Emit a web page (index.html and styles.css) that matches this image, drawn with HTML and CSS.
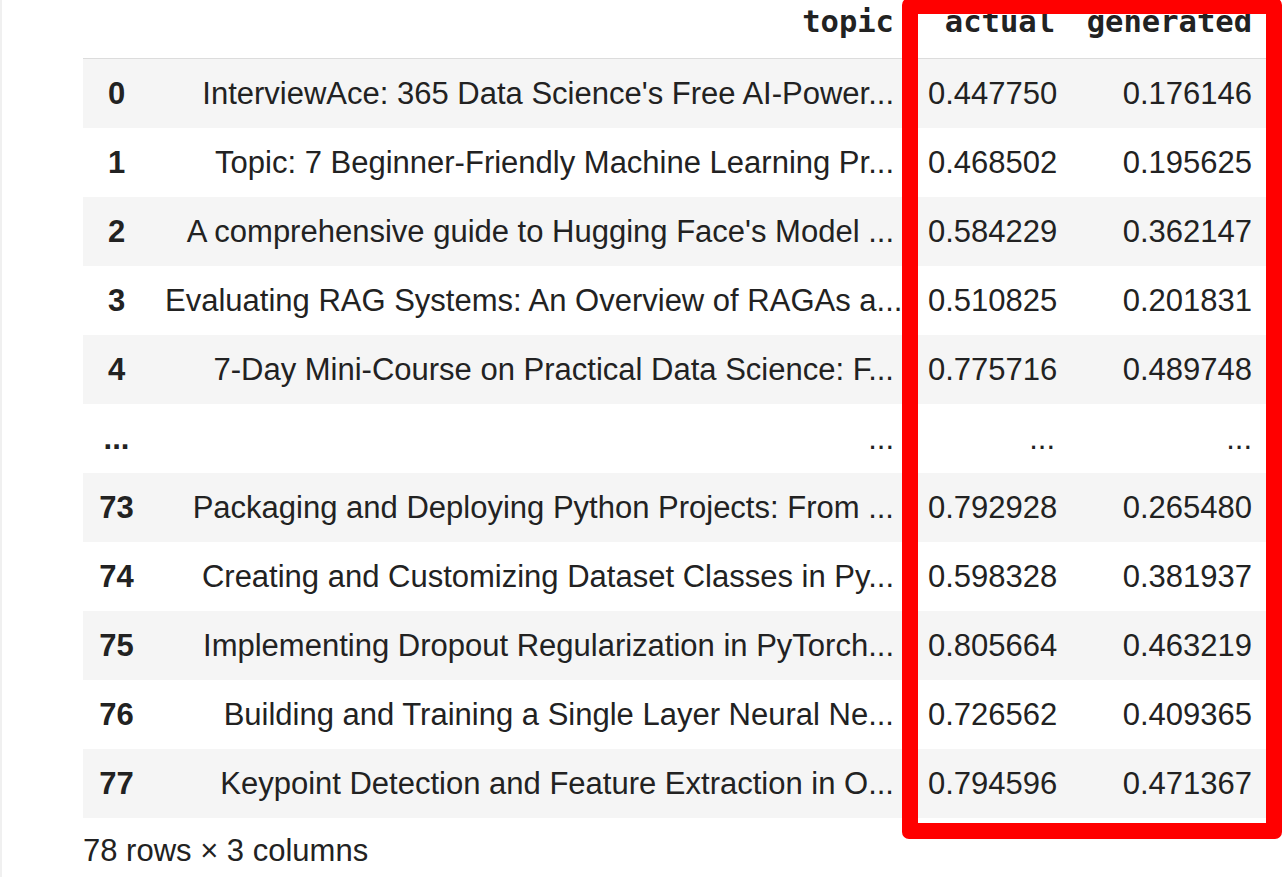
FILE: index.html
```html
<!DOCTYPE html>
<html lang="en">
<head>
<meta charset="utf-8">
<title>DataFrame output</title>
<link rel="stylesheet" href="styles.css">
</head>
<body>
<div class="output">
  <table class="dataframe">
    <colgroup>
      <col class="c-index">
      <col class="c-topic">
      <col class="c-actual">
      <col class="c-generated">
    </colgroup>
    <thead>
      <tr><th></th><th class="topic">topic</th><th class="actual">actual</th><th class="generated">generated</th></tr>
    </thead>
    <tbody>
      <tr><th>0</th><td class="topic">InterviewAce: 365 Data Science's Free AI-Power...</td><td class="actual">0.447750</td><td class="generated">0.176146</td></tr>
      <tr><th>1</th><td class="topic">Topic: 7 Beginner-Friendly Machine Learning Pr...</td><td class="actual">0.468502</td><td class="generated">0.195625</td></tr>
      <tr><th>2</th><td class="topic">A comprehensive guide to Hugging Face's Model ...</td><td class="actual">0.584229</td><td class="generated">0.362147</td></tr>
      <tr><th>3</th><td class="topic">Evaluating RAG Systems: An Overview of RAGAs a...</td><td class="actual">0.510825</td><td class="generated">0.201831</td></tr>
      <tr><th>4</th><td class="topic">7-Day Mini-Course on Practical Data Science: F...</td><td class="actual">0.775716</td><td class="generated">0.489748</td></tr>
      <tr><th>...</th><td class="topic">...</td><td class="actual">...</td><td class="generated">...</td></tr>
      <tr><th>73</th><td class="topic">Packaging and Deploying Python Projects: From ...</td><td class="actual">0.792928</td><td class="generated">0.265480</td></tr>
      <tr><th>74</th><td class="topic">Creating and Customizing Dataset Classes in Py...</td><td class="actual">0.598328</td><td class="generated">0.381937</td></tr>
      <tr><th>75</th><td class="topic">Implementing Dropout Regularization in PyTorch...</td><td class="actual">0.805664</td><td class="generated">0.463219</td></tr>
      <tr><th>76</th><td class="topic">Building and Training a Single Layer Neural Ne...</td><td class="actual">0.726562</td><td class="generated">0.409365</td></tr>
      <tr><th>77</th><td class="topic">Keypoint Detection and Feature Extraction in O...</td><td class="actual">0.794596</td><td class="generated">0.471367</td></tr>
    </tbody>
  </table>
  <p class="shape">78 rows × 3 columns</p>
  <div class="highlight"></div>
</div>
</body>
</html>
```

FILE: styles.css
```css
html, body {
  margin: 0;
  padding: 0;
  background: #ffffff;
}

body {
  font-family: "Liberation Sans", Arial, Helvetica, sans-serif;
  font-size: 31px;
  color: #222222;
  overflow: hidden;
}

.output {
  position: relative;
  border-left: 2px solid #f0f0f0;
  padding-left: 81px;
  min-height: 877px;
  box-sizing: border-box;
}

.dataframe {
  border-collapse: collapse;
  table-layout: fixed;
  width: 1183px;
}

.c-index { width: 67px; }
.c-topic { width: 763px; }
.c-actual { width: 158px; }
.c-generated { width: 195px; }

.dataframe thead th {
  font-family: "DejaVu Sans Mono", "Liberation Mono", monospace;
  font-weight: bold;
  font-size: 30.5px;
  line-height: 35px;
  text-align: right;
  padding: 4px 15px 19px 15px;
  border-bottom: 1px solid #dcdcdc;
  color: #222222;
  white-space: nowrap;
}

.dataframe tbody th,
.dataframe tbody td {
  line-height: 35px;
  padding: 17px 15px;
  white-space: nowrap;
  overflow: hidden;
}

.dataframe tbody th {
  font-weight: bold;
  text-align: center;
}

.dataframe tbody td {
  text-align: right;
}

.dataframe .topic {
  padding-right: 19px;
}

.dataframe .actual {
  padding-right: 16px;
}

.dataframe .generated {
  padding-right: 14px;
}

.dataframe tbody tr:nth-child(odd) {
  background: #f5f5f5;
}

.shape {
  margin: 15px 0 0 0;
  line-height: 35px;
}

.highlight {
  position: absolute;
  left: 900px;
  top: -2px;
  width: 348px;
  height: 809px;
  border: 16px solid #ff0000;
  border-radius: 7px;
}
```
